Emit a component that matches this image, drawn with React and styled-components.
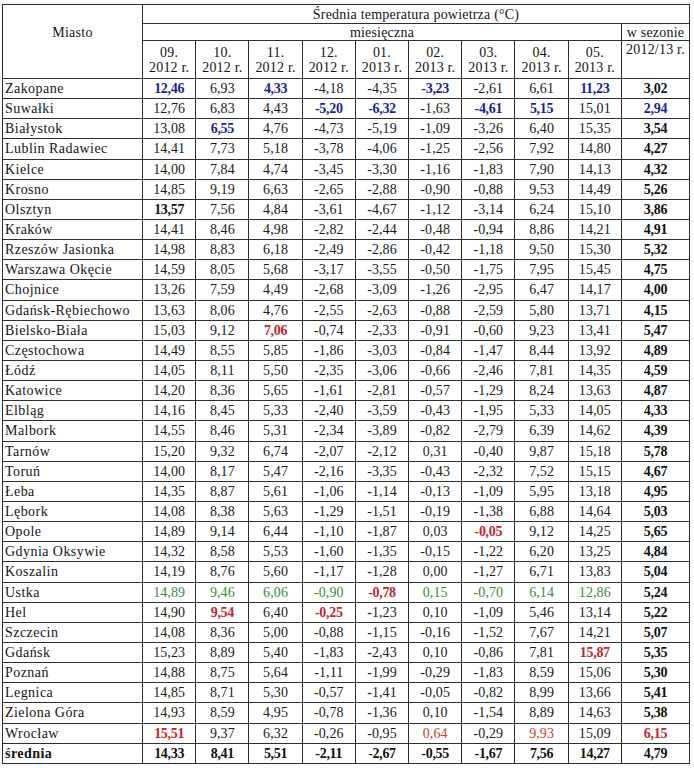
import React from "react";
import styled, { createGlobalStyle } from "styled-components";

const GlobalStyle = createGlobalStyle`
  html, body {
    margin: 0;
    padding: 0;
    background: #fff;
  }
  body {
    font-family: "Liberation Serif", "Times New Roman", serif;
    color: #141414;
  }
`;

const MONTHS = [
  ["09.", "2012 r."],
  ["10.", "2012 r."],
  ["11.", "2012 r."],
  ["12.", "2012 r."],
  ["01.", "2013 r."],
  ["02.", "2013 r."],
  ["03.", "2013 r."],
  ["04.", "2013 r."],
  ["05.", "2013 r."],
];

// suffix: b = bold blue, r = bold red, g = green, p = plain red, k = bold black
const ROWS = [
  ["Zakopane", "12,46 b", "6,93", "4,33 b", "-4,18", "-4,35", "-3,23 b", "-2,61", "6,61", "11,23 b", "3,02"],
  ["Suwałki", "12,76", "6,83", "4,43", "-5,20 b", "-6,32 b", "-1,63", "-4,61 b", "5,15 b", "15,01", "2,94 b"],
  ["Białystok", "13,08", "6,55 b", "4,76", "-4,73", "-5,19", "-1,09", "-3,26", "6,40", "15,35", "3,54"],
  ["Lublin Radawiec", "14,41", "7,73", "5,18", "-3,78", "-4,06", "-1,25", "-2,56", "7,92", "14,80", "4,27"],
  ["Kielce", "14,00", "7,84", "4,74", "-3,45", "-3,30", "-1,16", "-1,83", "7,90", "14,13", "4,32"],
  ["Krosno", "14,85", "9,19", "6,63", "-2,65", "-2,88", "-0,90", "-0,88", "9,53", "14,49", "5,26"],
  ["Olsztyn", "13,57 k", "7,56", "4,84", "-3,61", "-4,67", "-1,12", "-3,14", "6,24", "15,10", "3,86"],
  ["Kraków", "14,41", "8,46", "4,98", "-2,82", "-2,44", "-0,48", "-0,94", "8,86", "14,21", "4,91"],
  ["Rzeszów Jasionka", "14,98", "8,83", "6,18", "-2,49", "-2,86", "-0,42", "-1,18", "9,50", "15,30", "5,32"],
  ["Warszawa Okęcie", "14,59", "8,05", "5,68", "-3,17", "-3,55", "-0,50", "-1,75", "7,95", "15,45", "4,75"],
  ["Chojnice", "13,26", "7,59", "4,49", "-2,68", "-3,09", "-1,26", "-2,95", "6,47", "14,17", "4,00"],
  ["Gdańsk-Rębiechowo", "13,63", "8,06", "4,76", "-2,55", "-2,63", "-0,88", "-2,59", "5,80", "13,71", "4,15"],
  ["Bielsko-Biała", "15,03", "9,12", "7,06 r", "-0,74", "-2,33", "-0,91", "-0,60", "9,23", "13,41", "5,47"],
  ["Częstochowa", "14,49", "8,55", "5,85", "-1,86", "-3,03", "-0,84", "-1,47", "8,44", "13,92", "4,89"],
  ["Łódź", "14,05", "8,11", "5,50", "-2,35", "-3,06", "-0,66", "-2,46", "7,81", "14,35", "4,59"],
  ["Katowice", "14,20", "8,36", "5,65", "-1,61", "-2,81", "-0,57", "-1,29", "8,24", "13,63", "4,87"],
  ["Elbląg", "14,16", "8,45", "5,33", "-2,40", "-3,59", "-0,43", "-1,95", "5,33", "14,05", "4,33"],
  ["Malbork", "14,55", "8,46", "5,31", "-2,34", "-3,89", "-0,82", "-2,79", "6,39", "14,62", "4,39"],
  ["Tarnów", "15,20", "9,32", "6,74", "-2,07", "-2,12", "0,31", "-0,40", "9,87", "15,18", "5,78"],
  ["Toruń", "14,00", "8,17", "5,47", "-2,16", "-3,35", "-0,43", "-2,32", "7,52", "15,15", "4,67"],
  ["Łeba", "14,35", "8,87", "5,61", "-1,06", "-1,14", "-0,13", "-1,09", "5,95", "13,18", "4,95"],
  ["Lębork", "14,08", "8,38", "5,63", "-1,29", "-1,51", "-0,19", "-1,38", "6,88", "14,64", "5,03"],
  ["Opole", "14,89", "9,14", "6,44", "-1,10", "-1,87", "0,03", "-0,05 r", "9,12", "14,25", "5,65"],
  ["Gdynia Oksywie", "14,32", "8,58", "5,53", "-1,60", "-1,35", "-0,15", "-1,22", "6,20", "13,25", "4,84"],
  ["Koszalin", "14,19", "8,76", "5,60", "-1,17", "-1,28", "0,00", "-1,27", "6,71", "13,83", "5,04"],
  ["Ustka", "14,89 g", "9,46 g", "6,06 g", "-0,90 g", "-0,78 r", "0,15 g", "-0,70 g", "6,14 g", "12,86 g", "5,24"],
  ["Hel", "14,90", "9,54 r", "6,40", "-0,25 r", "-1,23", "0,10", "-1,09", "5,46", "13,14", "5,22"],
  ["Szczecin", "14,08", "8,36", "5,00", "-0,88", "-1,15", "-0,16", "-1,52", "7,67", "14,21", "5,07"],
  ["Gdańsk", "15,23", "8,89", "5,40", "-1,83", "-2,43", "0,10", "-0,86", "7,81", "15,87 r", "5,35"],
  ["Poznań", "14,88", "8,75", "5,64", "-1,11", "-1,99", "-0,29", "-1,83", "8,59", "15,06", "5,30"],
  ["Legnica", "14,85", "8,71", "5,30", "-0,57", "-1,41", "-0,05", "-0,82", "8,99", "13,66", "5,41"],
  ["Zielona Góra", "14,93", "8,59", "4,95", "-0,78", "-1,36", "0,10", "-1,54", "8,89", "14,63", "5,38"],
  ["Wrocław", "15,51 r", "9,37", "6,32", "-0,26", "-0,95", "0,64 p", "-0,29", "9,93 p", "15,09", "6,15 r"],
];

const AVERAGE = ["14,33", "8,41", "5,51", "-2,11", "-2,67", "-0,55", "-1,67", "7,56", "14,27", "4,79"];

const TONES = {
  b: { color: "#1c1f9a", bold: true },
  r: { color: "#c3262c", bold: true },
  g: { color: "#3d8a3d", bold: false },
  p: { color: "#cf3a3a", bold: false },
  k: { color: "#111", bold: true },
};

const parse = (raw, seasonal) => {
  const [value, mark] = raw.split(" ");
  const tone = TONES[mark] || (seasonal ? TONES.k : { color: "#1a1a1a", bold: false });
  return { value, ...tone };
};

const Sheet = styled.div`
  padding: 4px 0 0 2px;
`;

const Table = styled.table`
  width: 688px;
  table-layout: fixed;
  border-collapse: collapse;
  font-size: 14px;
  line-height: 15px;
`;

const Col = styled.col`
  width: ${(p) => p.$w}px;
`;

const HeadRow = styled.tr`
  height: ${(p) => p.$h}px;
`;

const Cell = styled.td`
  border: 1px solid #2e2e2e;
  padding: 0 1px;
  text-align: center;
  vertical-align: middle;
  white-space: nowrap;
  overflow: hidden;
`;

const CityHead = styled(Cell).attrs({ as: "th" })`
  font-weight: normal;
  padding-bottom: 18px;
  letter-spacing: 0.3px;
`;

const TitleHead = styled(Cell).attrs({ as: "th" })`
  font-weight: normal;
  letter-spacing: 0.2px;
`;

const MonthHead = styled(Cell).attrs({ as: "th" })`
  font-weight: normal;
  line-height: 15px;
  letter-spacing: 0.2px;
`;

const SeasonHead = styled(MonthHead)`
  vertical-align: top;
  padding-top: 1px;
`;

const DataRow = styled.tr`
  height: 20.15px;
`;

const NameCell = styled(Cell)`
  text-align: left;
  padding-left: 2px;
  letter-spacing: 0.45px;
  font-weight: ${(p) => (p.$bold ? "bold" : "normal")};
`;

const Value = styled(Cell)`
  color: ${(p) => p.$color};
  font-weight: ${(p) => (p.$bold ? "bold" : "normal")};
  letter-spacing: ${(p) => (p.$bold ? "-0.3px" : "0.1px")};
`;

const Row = ({ name, values, total }) => (
  <DataRow>
    <NameCell $bold={total}>{name}</NameCell>
    {values.map((raw, i) => {
      const cell = total
        ? { value: raw, color: "#111", bold: true }
        : parse(raw, i === values.length - 1);
      return (
        <Value key={i} $color={cell.color} $bold={cell.bold}>
          {cell.value}
        </Value>
      );
    })}
  </DataRow>
);

export default function App() {
  return (
    <Sheet>
      <GlobalStyle />
      <Table>
        <colgroup>
          <Col $w={140} />
          {MONTHS.map((m) => (
            <Col key={m[0]} $w={53.2} />
          ))}
          <Col $w={68} />
        </colgroup>
        <thead>
          <HeadRow $h={19}>
            <CityHead rowSpan={3}>Miasto</CityHead>
            <TitleHead colSpan={10}>Średnia temperatura powietrza (°C)</TitleHead>
          </HeadRow>
          <HeadRow $h={17}>
            <TitleHead colSpan={9}>miesięczna</TitleHead>
            <TitleHead>w sezonie</TitleHead>
          </HeadRow>
          <HeadRow $h={38}>
            {MONTHS.map(([month, year]) => (
              <MonthHead key={month}>
                {month}
                <br />
                {year}
              </MonthHead>
            ))}
            <SeasonHead>2012/13 r.</SeasonHead>
          </HeadRow>
        </thead>
        <tbody>
          {ROWS.map(([name, ...values]) => (
            <Row key={name} name={name} values={values} />
          ))}
          <Row name="średnia" values={AVERAGE} total />
        </tbody>
      </Table>
    </Sheet>
  );
}
